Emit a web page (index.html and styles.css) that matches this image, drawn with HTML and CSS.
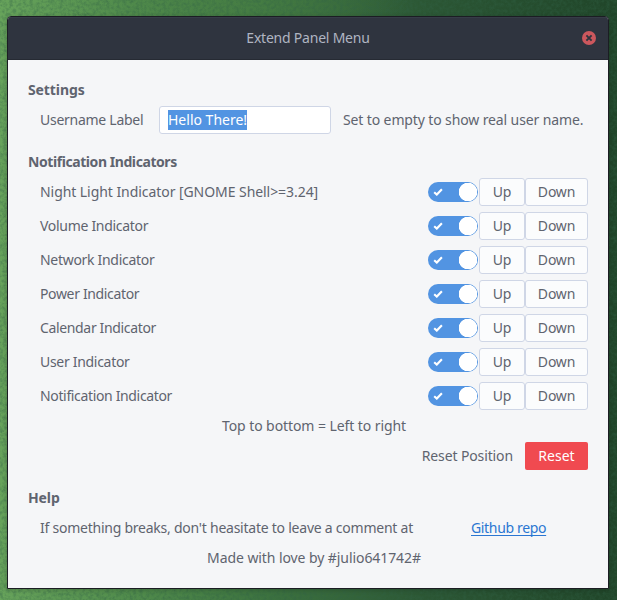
FILE: index.html
```html
<!DOCTYPE html>
<html lang="en">
<head>
<meta charset="utf-8">
<title>Extend Panel Menu</title>
<link rel="stylesheet" href="styles.css">
</head>
<body>
<svg class="texture" aria-hidden="true">
  <filter id="grain" x="0" y="0" width="100%" height="100%">
    <feTurbulence type="fractalNoise" baseFrequency="0.3" numOctaves="3" seed="4"/>
    <feColorMatrix type="matrix" values="0 0 0 0 0.03  0 0 0 0 0.12  0 0 0 0 0.06  0.9 0 0 0 -0.33"/>
  </filter>
  <rect width="100%" height="100%" filter="url(#grain)"/>
</svg>
<main class="window">
  <header class="titlebar">
    <h1 class="title">Extend Panel Menu</h1>
    <button class="close" aria-label="Close"><svg viewBox="0 0 14 14"><circle cx="7" cy="7" r="7" fill="#cc575d"/><path d="M4.4 4.4l5.2 5.2M9.6 4.4l-5.2 5.2" stroke="#2f343f" stroke-width="1.9"/></svg></button>
  </header>
  <div class="content">
    <section>
      <h2>Settings</h2>
      <div class="row username">
        <label class="name-label">Username Label</label>
        <div class="entry"><span class="selection">Hello There!</span></div>
        <span class="hint">Set to empty to show real user name.</span>
      </div>
    </section>
    <section>
      <h2 class="long">Notification Indicators</h2>
      <div class="row"><span class="label wide">Night Light Indicator [GNOME Shell&gt;=3.24]</span><span class="switch"><svg viewBox="0 0 10 8"><path d="M1.2 4.2L3.8 6.6 8.9 1.3"/></svg></span><button class="up">Up</button><button class="down">Down</button></div>
      <div class="row"><span class="label">Volume Indicator</span><span class="switch"><svg viewBox="0 0 10 8"><path d="M1.2 4.2L3.8 6.6 8.9 1.3"/></svg></span><button class="up">Up</button><button class="down">Down</button></div>
      <div class="row"><span class="label">Network Indicator</span><span class="switch"><svg viewBox="0 0 10 8"><path d="M1.2 4.2L3.8 6.6 8.9 1.3"/></svg></span><button class="up">Up</button><button class="down">Down</button></div>
      <div class="row"><span class="label tight">Power Indicator</span><span class="switch"><svg viewBox="0 0 10 8"><path d="M1.2 4.2L3.8 6.6 8.9 1.3"/></svg></span><button class="up">Up</button><button class="down">Down</button></div>
      <div class="row"><span class="label tight">Calendar Indicator</span><span class="switch"><svg viewBox="0 0 10 8"><path d="M1.2 4.2L3.8 6.6 8.9 1.3"/></svg></span><button class="up">Up</button><button class="down">Down</button></div>
      <div class="row"><span class="label">User Indicator</span><span class="switch"><svg viewBox="0 0 10 8"><path d="M1.2 4.2L3.8 6.6 8.9 1.3"/></svg></span><button class="up">Up</button><button class="down">Down</button></div>
      <div class="row"><span class="label tight">Notification Indicator</span><span class="switch"><svg viewBox="0 0 10 8"><path d="M1.2 4.2L3.8 6.6 8.9 1.3"/></svg></span><button class="up">Up</button><button class="down">Down</button></div>
      <p class="order">Top to bottom = Left to right</p>
      <div class="row reset-row"><span class="reset-label">Reset Position</span><button class="reset">Reset</button></div>
    </section>
    <section>
      <h2>Help</h2>
      <div class="help-row"><span class="help-text">If something breaks, don't heasitate to leave a comment at</span><a class="repo" href="#">Github repo</a></div>
      <p class="credit">Made with love by #julio641742#</p>
    </section>
  </div>
</main>
</body>
</html>
```
FILE: styles.css
```css
* { box-sizing: border-box; }
html, body { height: 100%; }
body {
  margin: 0;
  padding: 16px 8px 11px 7px;
  overflow: hidden;
  font: 14px/20px "Noto Sans", sans-serif;
  color: #5f646f;
  background:
    radial-gradient(ellipse 170px 70px at 240px 0, rgba(76, 132, 70, .55), transparent),
    linear-gradient(90deg, #67a35b 0, #518c4c 130px, #3c723f 270px, #2b5634 430px, #204529 617px);
}
.texture { position: absolute; inset: 0; width: 100%; height: 100%; }
h1, h2, p { margin: 0; font-size: 14px; line-height: 20px; }
button { font: inherit; color: inherit; padding: 0; }
.window {
  position: relative;
  height: 573px;
  border: 1px solid #1b1d23;
  border-radius: 4px 4px 0 0;
  background: #f5f6f8;
  overflow: hidden;
  box-shadow: 0 1px 5px rgba(0, 0, 0, .2);
}
.titlebar {
  display: grid;
  grid-template-columns: 1fr auto 1fr;
  align-items: center;
  height: 43px;
  padding: 0 12px 2px;
  background: #2f343f;
  border-top: 1px solid #363b47;
  border-bottom: 1px solid #262a33;
}
.title { grid-column: 2; font-weight: 400; color: #afb5c2; letter-spacing: -.22px; }
.close { justify-self: end; width: 14px; height: 14px; border: 0; background: none; }
.close svg { display: block; width: 14px; height: 14px; }
.content { padding: 20px; }
section + section { margin-top: 18px; }
h2 { font-weight: 700; letter-spacing: -.1px; }
h2.long { letter-spacing: -.43px; }
.row { display: flex; align-items: center; height: 28px; margin-top: 6px; padding-left: 12px; white-space: nowrap; }
.name-label { width: 119px; letter-spacing: -.27px; }
.entry { width: 172px; height: 28px; padding: 3px 8px; background: #fff; border: 1px solid #cfd6e6; border-radius: 3px; }
.selection { display: block; width: 79px; height: 20px; color: #fff; background: #5294e2; }
.hint { margin-left: 12px; letter-spacing: -.12px; }
.label { flex: 1; letter-spacing: -.3px; }
.label.wide { letter-spacing: -.06px; }
.label.tight { letter-spacing: -.35px; }
.switch { display: flex; align-items: center; width: 50px; height: 20px; padding-left: 5px; border-radius: 10px; background: radial-gradient(circle 9.4px at 40px 10px, #fff 9px, transparent 9.5px), #5294e2; }
.switch svg { width: 10px; height: 8px; fill: none; stroke: #fff; stroke-width: 2.1; }
.up, .down { height: 28px; background: #fbfcfd; border: 1px solid #cfd6e6; border-radius: 3px; letter-spacing: -.2px; }
.up { width: 46px; margin-left: 1px; }
.down { width: 63px; }
.order, .credit { text-align: center; letter-spacing: -.08px; }
.order { margin-top: 6px; padding-left: 12px; }
.reset-row { justify-content: flex-end; }
.reset-label { letter-spacing: -.12px; }
.reset { width: 63px; height: 28px; margin-left: 12px; border: 0; border-radius: 2px; color: #fff; background: #f04a50; }
.help-row { display: flex; margin-top: 10px; padding-left: 12px; white-space: nowrap; }
.help-text { width: 431px; letter-spacing: -.24px; }
.repo { color: #2a76d2; letter-spacing: -.34px; text-decoration: underline; text-underline-offset: 2px; text-decoration-skip-ink: none; }
.credit { margin-top: 10px; padding-left: 12px; }
```
